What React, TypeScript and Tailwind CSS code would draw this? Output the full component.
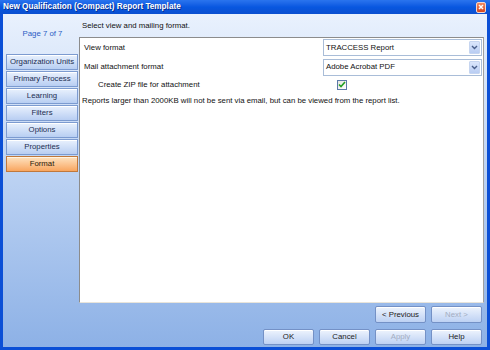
import React from "react";

const font = { fontFamily: '"Liberation Sans", Arial, sans-serif' };

function NavButton({ label, active }: { label: string; active?: boolean }) {
  return (
    <div
      className={
        active
          ? "h-[16px] flex items-center justify-center border border-[#c0783c] bg-gradient-to-b from-[#fde3c0] to-[#f8a55e] text-[7.8px] text-[#2a1a08] shadow-[inset_0_1px_0_#fff3e0]"
          : "h-[16px] flex items-center justify-center border border-[#7c9bd0] bg-gradient-to-b from-[#e9f1fd] to-[#b8cef2] text-[7.8px] text-[#1c2e52] shadow-[inset_0_1px_0_#ffffff]"
      }
    >
      {label}
    </div>
  );
}

function Btn({ label, disabled }: { label: string; disabled?: boolean }) {
  return (
    <div
      className={
        "w-[51px] h-full flex items-center justify-center border border-[#7491c6] rounded-[2px] bg-gradient-to-b from-[#eef4fd] to-[#bdd1f3] shadow-[inset_0_1px_0_#ffffff] text-[7.8px] " +
        (disabled ? "text-[#a3adc2]" : "text-[#1a1a1a]")
      }
    >
      {label}
    </div>
  );
}

function Dropdown({ value }: { value: string }) {
  return (
    <div className="ml-auto mr-[1px] w-[159px] h-[17px] border border-[#a9bdd8] bg-white flex items-center pl-[2px] pr-[1px]">
      <span className="flex-1 text-[7.8px] text-[#111]">{value}</span>
      <div className="w-[11px] h-[13px] rounded-[1px] bg-gradient-to-b from-[#dbe6fb] to-[#b9cdf3] border border-[#c6d5f0] flex items-center justify-center">
        <svg width="7" height="5" viewBox="0 0 7 5">
          <path d="M1 1 L3.5 3.5 L6 1" fill="none" stroke="#4a5f8a" strokeWidth="1.4" />
        </svg>
      </div>
    </div>
  );
}

export default function App() {
  return (
    <div style={font} className="w-[490px] h-[350px] flex flex-col bg-[#0b4fd6] overflow-hidden">
      {/* Title bar */}
      <div className="h-[14px] flex items-center pl-[3px] pr-[4px] bg-gradient-to-b from-[#2a74ee] via-[#0857e0] to-[#0a4fd0]">
        <span className="text-white font-bold text-[8.2px] leading-none [text-shadow:1px_1px_0_#0a2f8a]">
          New Qualification (Compact) Report Template
        </span>
        <div className="ml-auto w-[10px] h-[11px] rounded-[2px] border border-[#f3d7cc] bg-gradient-to-b from-[#f08a62] to-[#d4431c] flex items-center justify-center">
          <svg width="6" height="6" viewBox="0 0 6 6">
            <path d="M1 1 L5 5 M5 1 L1 5" stroke="#ffffff" strokeWidth="1.5" />
          </svg>
        </div>
      </div>

      {/* Body */}
      <div className="flex-1 flex mx-[3px] mb-[3px] bg-gradient-to-b from-[#e9f1fd] to-[#8db1e6]">
        {/* Left column */}
        <div className="w-[76px] flex flex-col">
          <div className="h-[40px] flex items-center justify-center pl-[3px] text-[7.8px] text-[#2b5cc4]">
            Page 7 of 7
          </div>
          <div className="ml-[3px] w-[72px] flex flex-col gap-[1px]">
            <NavButton label="Organization Units" />
            <NavButton label="Primary Process" />
            <NavButton label="Learning" />
            <NavButton label="Filters" />
            <NavButton label="Options" />
            <NavButton label="Properties" />
            <NavButton label="Format" active />
          </div>
        </div>

        {/* Right column */}
        <div className="flex-1 flex flex-col">
          <div className="h-[23px] flex items-center pl-[3px] text-[7.8px] text-[#111]">
            Select view and mailing format.
          </div>
          <div className="flex-1 mr-[3px] bg-white border-t border-l border-[#8c8c8c] border-r border-r-[#a0a0a0] border-b border-b-[#e8e4da] flex flex-col text-[7.8px] text-[#111]">
            <div className="h-[19px] flex items-center pl-[4px]">
              <span>View format</span>
              <Dropdown value="TRACCESS Report" />
            </div>
            <div className="h-[20px] flex items-center pl-[4px]">
              <span>Mail attachment format</span>
              <Dropdown value="Adobe Acrobat PDF" />
            </div>
            <div className="h-[15px] flex items-center">
              <span className="w-[257px] pl-[18px]">Create ZIP file for attachment</span>
              <div className="w-[10px] h-[10px] border border-[#5b7aa8] bg-gradient-to-br from-[#e6e6e0] to-[#ffffff] flex items-center justify-center">
                <svg width="8" height="7" viewBox="0 0 8 7">
                  <path d="M1 3.5 L3 5.5 L7 1" fill="none" stroke="#22a022" strokeWidth="1.6" />
                </svg>
              </div>
            </div>
            <div className="h-[18px] flex items-center pl-[2px]">
              Reports larger than 2000KB will not be sent via email, but can be viewed from the report list.
            </div>
          </div>
          <div className="h-[44px] flex flex-col items-end pr-[5px] pt-[3px]">
            <div className="h-[17px] flex gap-[5px]">
              <Btn label="< Previous" />
              <Btn label="Next >" disabled />
            </div>
            <div className="h-[16px] mt-[6px] flex gap-[5px]">
              <Btn label="OK" />
              <Btn label="Cancel" />
              <Btn label="Apply" disabled />
              <Btn label="Help" />
            </div>
          </div>
        </div>
      </div>
    </div>
  );
}
